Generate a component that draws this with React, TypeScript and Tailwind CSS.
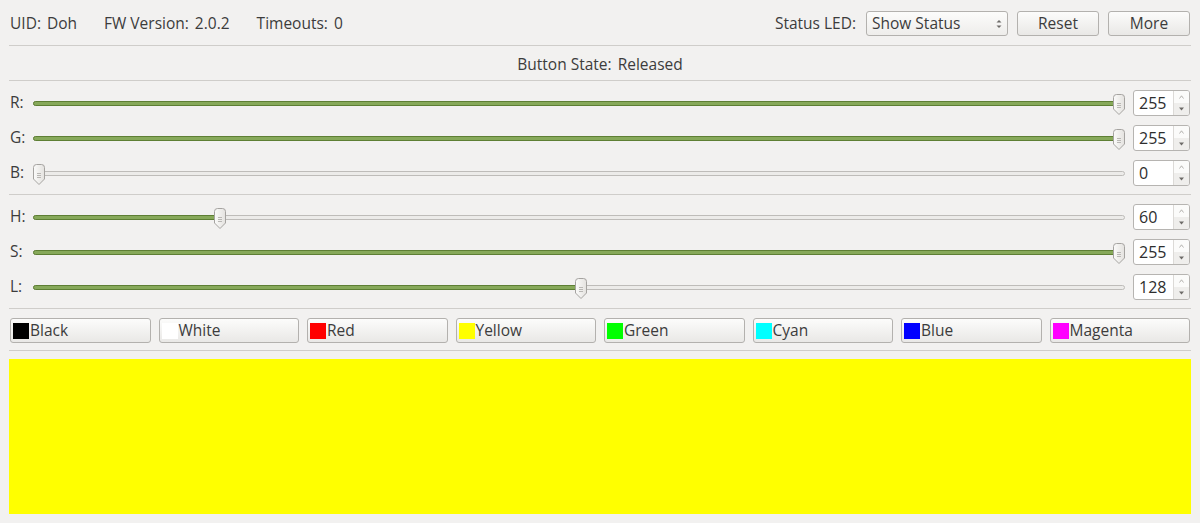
import React from "react";

const FONT = { fontFamily: '"Open Sans", "DejaVu Sans", sans-serif' };

function Separator() {
  return <div className="h-px bg-[#cfcdca] shrink-0" />;
}

function Handle() {
  return (
    <svg width="12" height="21" viewBox="0 0 12 21" className="block">
      <defs>
        <linearGradient id="hg" x1="0" y1="0" x2="1" y2="0">
          <stop offset="0" stopColor="#fbfbfa" />
          <stop offset="1" stopColor="#e4e2df" />
        </linearGradient>
      </defs>
      <path
        d="M3.5 0.5 H8.5 A3 3 0 0 1 11.5 3.5 V15 L6 20.5 L0.5 15 V3.5 A3 3 0 0 1 3.5 0.5 Z"
        fill="url(#hg)"
        stroke="#a5a3a0"
      />
      <path d="M4 9.5 H8 M4 11.5 H8 M4 13.5 H8" stroke="#b9b7b4" strokeWidth="1" />
    </svg>
  );
}

function SpinBox({ value }: { value: number }) {
  return (
    <div className="flex w-[57px] h-[26px] bg-white border border-[#b6b4b1] rounded-[3px] overflow-hidden shrink-0">
      <div className="flex-1 flex items-center pl-[5px] text-[16px] text-[#2e2e2e]">{value}</div>
      <div className="w-[16px] border-l border-[#dcdad7] flex flex-col">
        <div className="flex-1 flex items-center justify-center bg-[#fbfbfa]">
          <svg width="5" height="4" viewBox="0 0 5 4">
            <path d="M0.5 3.5 L2.5 0.8 L4.5 3.5" fill="none" stroke="#a3a19e" strokeWidth="0.8" />
          </svg>
        </div>
        <div className="flex-1 flex items-center justify-center bg-[#efeeec]">
          <svg width="5" height="4" viewBox="0 0 5 4">
            <path d="M0 0.5 H5 L2.5 3.5 Z" fill="#6d6b68" />
          </svg>
        </div>
      </div>
    </div>
  );
}

function SliderRow({ label, value, max }: { label: string; value: number; max: number }) {
  const frac = value / max;
  const handleLeft = `calc(${frac} * (100% - 12px))`;
  return (
    <div className="flex items-center h-[26px] shrink-0">
      <div className="w-[24px] pl-px text-[15.5px] text-[#3c3c3c]">{label}</div>
      <div className="relative flex-1 h-[26px] flex items-center">
        <div className="w-full h-[5px] rounded-full bg-[#ecebe9] border border-[#bebcb9]" />
        {value > 0 && (
          <div
            className="absolute left-0 h-[5px] rounded-full bg-[#87a95a] border border-[#5e7f34]"
            style={{ width: `calc(${frac} * (100% - 12px) + 6px)` }}
          />
        )}
        <div className="absolute top-[4px]" style={{ left: handleLeft }}>
          <Handle />
        </div>
      </div>
      <div className="w-[8px]" />
      <SpinBox value={value} />
      <div className="w-[1px]" />
    </div>
  );
}

function Button({ children, className = "" }: { children: React.ReactNode; className?: string }) {
  return (
    <div
      className={`h-[25px] rounded-[3px] border border-[#b3b1ae] bg-gradient-to-b from-[#fcfcfb] to-[#e9e8e6] flex items-center text-[15.5px] text-[#3c3c3c] ${className}`}
    >
      {children}
    </div>
  );
}

const colors = [
  { name: "Black", color: "#000000" },
  { name: "White", color: "#ffffff" },
  { name: "Red", color: "#ff0000" },
  { name: "Yellow", color: "#ffff00" },
  { name: "Green", color: "#00ff00" },
  { name: "Cyan", color: "#00ffff" },
  { name: "Blue", color: "#0000ff" },
  { name: "Magenta", color: "#ff00ff" },
];

export default function App() {
  return (
    <div
      className="w-[1200px] h-[523px] bg-[#f2f1f0] px-[9px] flex flex-col text-[#3c3c3c] overflow-hidden"
      style={FONT}
    >
      <div className="h-[45px] pt-[2px] flex items-center shrink-0 text-[15.5px]">
        <div className="flex items-center pl-px gap-[27px]">
          <span>
            UID:<span className="ml-[6px]">Doh</span>
          </span>
          <span>
            FW Version:<span className="ml-[6px]">2.0.2</span>
          </span>
          <span>
            Timeouts:<span className="ml-[6px]">0</span>
          </span>
        </div>
        <div className="ml-auto flex items-center">
          <span className="mr-[10px]">Status LED:</span>
          <div className="w-[142px] h-[25px] rounded-[3px] border border-[#b3b1ae] bg-gradient-to-b from-[#fcfcfb] to-[#eeedeb] flex items-center pl-[5px] pr-[5px]">
            <span className="flex-1">Show Status</span>
            <svg width="6" height="10" viewBox="0 0 6 10">
              <path d="M0.5 3.5 L3 1 L5.5 3.5 Z" fill="#6d6b68" />
              <path d="M0.5 6.5 L3 9 L5.5 6.5 Z" fill="#6d6b68" />
            </svg>
          </div>
          <Button className="w-[82px] justify-center ml-[9px]">Reset</Button>
          <Button className="w-[82px] justify-center ml-[9px] mr-px">More</Button>
        </div>
      </div>
      <Separator />
      <div className="h-[34px] pt-[3px] flex items-center justify-center shrink-0 text-[15.5px]">
        Button State:<span className="ml-[6px]">Released</span>
      </div>
      <Separator />
      <div className="flex flex-col gap-[9px] pt-[9px] pb-[8px]">
        <SliderRow label="R:" value={255} max={255} />
        <SliderRow label="G:" value={255} max={255} />
        <SliderRow label="B:" value={0} max={255} />
      </div>
      <Separator />
      <div className="flex flex-col gap-[9px] pt-[9px] pb-[8px]">
        <SliderRow label="H:" value={60} max={359} />
        <SliderRow label="S:" value={255} max={255} />
        <SliderRow label="L:" value={128} max={255} />
      </div>
      <Separator />
      <div className="grid grid-cols-8 gap-[8px] pt-[9px] pb-[7px] px-px">
        {colors.map((c) => (
          <Button key={c.name} className="pl-[2px]">
            <span className="w-[16px] h-[16px] shrink-0" style={{ backgroundColor: c.color }} />
            <span className="ml-[1px]">{c.name}</span>
          </Button>
        ))}
      </div>
      <Separator />
      <div className="mt-[8px] h-[155px] bg-[#ffff00] shrink-0" />
    </div>
  );
}
